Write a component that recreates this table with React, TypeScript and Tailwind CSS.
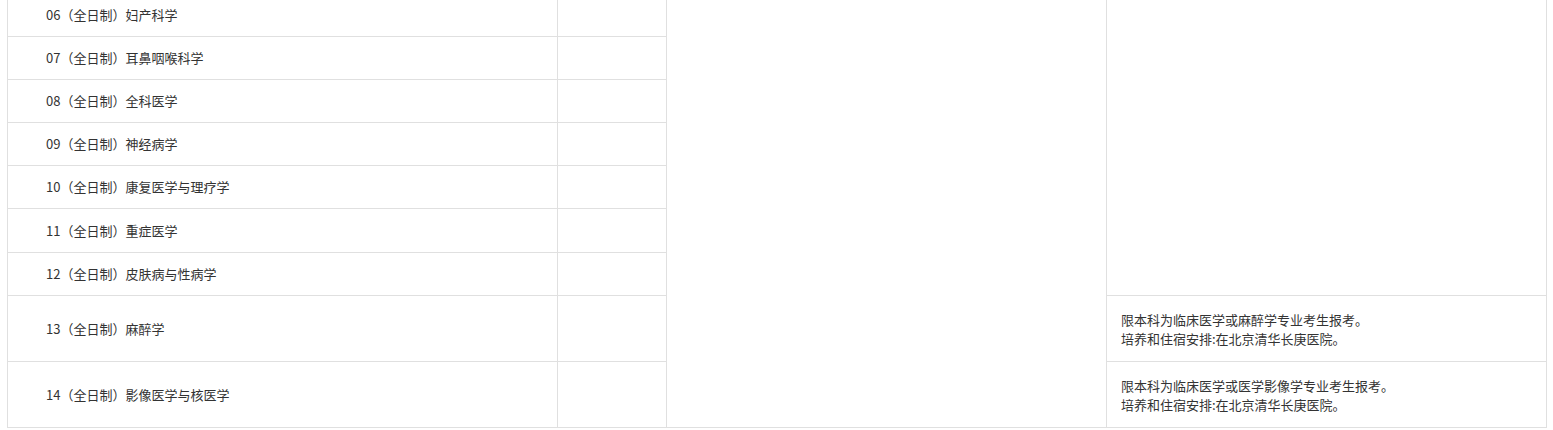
import React from "react";

const rows = [
  "06（全日制）妇产科学",
  "07（全日制）耳鼻咽喉科学",
  "08（全日制）全科医学",
  "09（全日制）神经病学",
  "10（全日制）康复医学与理疗学",
  "11（全日制）重症医学",
  "12（全日制）皮肤病与性病学",
];

const note1 = ["限本科为临床医学或麻醉学专业考生报考。", "培养和住宿安排:在北京清华长庚医院。"];
const note2 = ["限本科为临床医学或医学影像学专业考生报考。", "培养和住宿安排:在北京清华长庚医院。"];

const td = "border border-[#e0e0e0] p-0 align-middle";

export default function App() {
  return (
    <div
      className="bg-white w-[1553px] h-[430px] overflow-hidden text-[13px] text-[#333]"
      style={{ fontFamily: '"Microsoft YaHei", "Noto Sans CJK SC", sans-serif' }}
    >
      <div className="pl-[7px] -mt-[7px]">
        <table className="border-collapse table-fixed w-[1539px]">
          <colgroup>
            <col className="w-[550px]" />
            <col className="w-[109px]" />
            <col className="w-[440px]" />
            <col className="w-[440px]" />
          </colgroup>
          <tbody>
            {rows.map((r, i) => (
              <tr key={r} className={i === 5 ? "h-[44px]" : "h-[43px]"}>
                <td className={`${td} pl-[38px]`}>{r}</td>
                <td className={td}></td>
                {i === 0 && <td className={td} rowSpan={9}></td>}
                {i === 0 && <td className={td} rowSpan={7}></td>}
              </tr>
            ))}
            <tr className="h-[66px]">
              <td className={`${td} pl-[38px]`}>13（全日制）麻醉学</td>
              <td className={td}></td>
              <td className={`${td} pl-[14px] leading-[19px]`}>
                {note1.map((l) => (
                  <div key={l}>{l}</div>
                ))}
              </td>
            </tr>
            <tr className="h-[66px]">
              <td className={`${td} pl-[38px]`}>14（全日制）影像医学与核医学</td>
              <td className={td}></td>
              <td className={`${td} pl-[14px] leading-[19px]`}>
                {note2.map((l) => (
                  <div key={l}>{l}</div>
                ))}
              </td>
            </tr>
          </tbody>
        </table>
      </div>
    </div>
  );
}
